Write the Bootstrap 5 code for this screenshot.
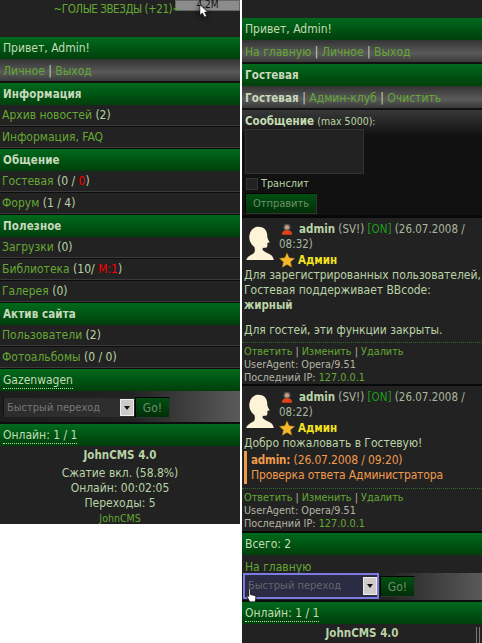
<!DOCTYPE html>
<html lang="ru">
<head>
  <meta charset="UTF-8" />
  <meta name="viewport" content="width=device-width, initial-scale=1" />
  <title>JohnCMS</title>
  <link href="https://cdn.jsdelivr.net/npm/bootstrap@5.3.0/dist/css/bootstrap.min.css" rel="stylesheet" />
  <style>
    body { background: #fff; font-family: "DejaVu Sans Condensed", "DejaVu Sans", sans-serif; font-size: 12px; line-height: 15px; color: #b9d3a6; overflow: hidden; }
    a { color: #64a832; text-decoration: none; }
    b { font-size: 11.5px; }
    .red { color: #f00; }
    .shot { width: 482px; height: 643px; overflow: hidden; }
    .pane { width: 240px; background: #222; position: relative; flex: none; }
    .pane-l { height: 524px; }
    .pane-r { height: 643px; margin-left: 2px; }
    .top-l { height: 37px; text-align: center; color: #64a832; font-size: 11.500px; letter-spacing: -.45px; padding-right: 6px; line-height: 18px; position: relative; z-index: 1; }
    .top-r { height: 18px; }
    .bar { height: 22px; line-height: 23px; padding-left: 3px; color: #c3dcb1; background: linear-gradient(#006a1c, #003f0b); }
    .bar b { color: #c9d9bc; letter-spacing: .1px; }
    .bar span { border-bottom: 1px dotted #c3dcb1; padding-bottom: 1px; }
    .sub { height: 24px; line-height: 24px; padding-left: 3px; background: linear-gradient(#333, #5a5a5a 60%, #3a3a3a); border-bottom: 2px solid #111; color: #c3dcb1; }
    .sub b { color: #c9d9bc; letter-spacing: .1px; }
    .rowline { height: 22px; line-height: 21px; padding-left: 2px; background: #222; border-bottom: 1px solid #0c0c0c; box-shadow: inset 0 -1px 0 #3a3a3a; }
    .jump { height: 33px; gap: 1px; padding: 6px 0 0 3px; background: linear-gradient(90deg, #1d1d1d, #222 55%, #5a5a5a); border-bottom: 2px solid #0d0d0d; }
    .pick { width: 131px; height: 19px; margin-top: 1px; background: #2d2d2d; color: #777; font-size: 11px; line-height: 19px; padding-left: 3px; position: relative; border-left: 1px solid #111; }
    .pick i { position: absolute; right: 0; top: 1px; width: 14px; height: 17px; background: #cfcbc8; border: 1px solid #eee; }
    .pick i::after { content: ""; position: absolute; left: 3px; top: 6px; border: 3px solid transparent; border-top: 4px solid #111; }
    .go { width: 35px; height: 21px; background: linear-gradient(#004f12, #002f08); color: #6f8d68; text-align: center; line-height: 20px; border-top: 1px solid #000; border-left: 1px solid #000; border-right: 1px solid #333; border-bottom: 1px solid #333; }
    .end { text-align: center; line-height: 15px; padding-top: 2px; }
    .end div { height: 15px; }
    .end .ttl { font-weight: 700; font-size: 11.5px; height: 18px; }
    .end a { font-size: 10.5px; }
    .form-box { height: 108px; padding: 0 3px; background: linear-gradient(#383838, #111 26px); border-bottom: 3px solid #080808; line-height: 22px; }
    .form-box b { color: #c3dcb1; }
    .ta { width: 119px; height: 45px; margin-top: -3px; background: #222; border: 1px solid #333; }
    .tr-line { height: 18px; line-height: 18px; font-size: 10.800px; margin-top: 1px; }
    .chk { width: 12px; height: 12px; margin-left: 1px; background: #222; border: 1px solid #333; margin-right: 3px; }
    .send { width: 72px; height: 21px; text-align: center; line-height: 20px; font-size: 11px; background: linear-gradient(#004f12, #002f08); color: #6f8d68; border-top: 1px solid #000; border-left: 1px solid #000; border-right: 1px solid #333; border-bottom: 1px solid #333; }
    .post { border-bottom: 2px solid #080808; }
    .post-1 { height: 168px; }
    .post-2 { height: 147px; }
    .head { height: 50px; }
    .ava { width: 37px; height: 50px; flex: none; }
    .who { padding-top: 4px; font-size: 11.500px; line-height: 15px; color: #aab69f; }
    .who b { color: #b9d3a6; }
    .ic-usr { margin: 0 6px 0 2px; vertical-align: -3px; }
    .ic-star { margin-right: 3px; vertical-align: -4px; }
    .on { color: #1e9a1e; }
    .rank { color: #f4e21d; font-weight: 700; }
    .txt { line-height: 15px; color: #b9d3a6; padding-left: 2px; white-space: nowrap; letter-spacing: -.03px; }
    .txt p { margin: 0; }
    .txt p + p { margin-top: 10px; }
    .quote { border-left: 3px solid #f09a4c; color: #f09a4c; padding: 2px 0 1px 4px; margin: 0 0 1px; letter-spacing: -.15px; }
    .foot { border-top: 1px dotted #2f6a2a; margin-top: 4px; padding: 2px 0 0 2px; font-size: 10.800px; line-height: 13px; color: #b4b4a4; }
    .home { height: 18px; line-height: 24px; padding-left: 3px; }
    .jump-r { height: 29px; padding: 0 0 0 1px; gap: 1px; background: linear-gradient(90deg, #1d1d1d, #222 60%, #5a5a5a); border-bottom: 2px solid #0d0d0d; }
    .jump-r .pick { width: 136px; height: 26px; margin-top: 0; background: #2b2b44; border: 2px solid #7a7ae0; color: #666; line-height: 22px; }
    .jump-r .pick i { top: 2px; height: 18px; }
    .jump-r .go { margin-top: 3px; }
    .load { position: absolute; left: 175px; top: 0; width: 65px; height: 11px; background: #8c8c8c; border: 1px solid #666; color: #111; font-size: 10px; line-height: 8px; text-align: center; }
    .arrow { position: absolute; left: 199px; top: 5px; filter: drop-shadow(0 1px 3px #000); z-index: 2; }
    .hand { position: absolute; left: 4px; top: 588px; }
    .track { position: absolute; right: 2px; top: 627px; width: 4px; height: 16px; border-left: 1px solid #777; border-right: 1px solid #777; }
  </style>
</head>
<body>
  <svg width="0" height="0" class="position-absolute">
    <symbol id="head" viewBox="0 0 36 42"><path d="M14 1c7-1 13 3 13 11 0 3 1 5 3 8l-3 1c0 2 1 5-2 6-2 0-3 0-4 1 0 3 6 5 11 8 2 2 3 4 3 6H1c1-4 5-6 9-8 2-2 2-5 1-8-5-4-7-9-6-15C6 6 9 2 14 1z" fill="#fdf3d6"/></symbol>
    <symbol id="usr" viewBox="0 0 14 14"><circle cx="7" cy="4.500" r="4.200" fill="#555"/><circle cx="7" cy="4.500" r="2.600" fill="#c9a080"/><path d="M1 13c0-4 3-5 6-5s6 1 6 5z" fill="#e0401a"/></symbol>
    <symbol id="star" viewBox="0 0 18 18"><path d="M9 1l2.400 5.600 6.100.6-4.600 4 1.400 6L9 14l-5.300 3.200 1.400-6-4.600-4 6.100-.6z" fill="#f4b92a" stroke="#c9821a" stroke-width=".5"/></symbol>
  </svg>
  <div class="shot d-flex">
    <div class="pane pane-l">
      <div class="top-l">~ГОЛЫЕ ЗВЕЗДЫ (+21)~</div>
      <div class="bar">Привет, Admin!</div>
      <div class="sub"><a href="#">Личное</a> | <a href="#">Выход</a></div>
      <div class="bar"><b>Информация</b></div>
      <div class="rowline"><a href="#">Архив новостей</a> (2)</div>
      <div class="rowline"><a href="#">Информация, FAQ</a></div>
      <div class="bar"><b>Общение</b></div>
      <div class="rowline"><a href="#">Гостевая</a> (0 / <span class="red">0</span>)</div>
      <div class="rowline"><a href="#">Форум</a> (1 / 4)</div>
      <div class="bar"><b>Полезное</b></div>
      <div class="rowline"><a href="#">Загрузки</a> (0)</div>
      <div class="rowline"><a href="#">Библиотека</a> (10/ <span class="red">М:1</span>)</div>
      <div class="rowline"><a href="#">Галерея</a> (0)</div>
      <div class="bar"><b>Актив сайта</b></div>
      <div class="rowline"><a href="#">Пользователи</a> (2)</div>
      <div class="rowline"><a href="#">Фотоальбомы</a> (0 / 0)</div>
      <div class="bar"><span>Gazenwagen</span></div>
      <div class="jump d-flex">
        <div class="pick">Быстрый переход<i></i></div>
        <div class="go">Go!</div>
      </div>
      <div class="bar"><span>Онлайн: 1 / 1</span></div>
      <div class="end">
        <div class="ttl">JohnCMS 4.0</div>
        <div>Сжатие вкл. (58.8%)</div>
        <div>Онлайн: 00:02:05</div>
        <div>Переходы: 5</div>
        <div><a href="#">JohnCMS</a></div>
      </div>
      <div class="load">4.2M</div>
      <svg class="arrow" width="10" height="13" viewBox="0 0 10 13"><path d="M1 0v10l2.500-2 2 4 2-1-2-4h3z" fill="#fff" stroke="#111" stroke-width=".5"/></svg>
    </div>
    <div class="pane pane-r">
      <div class="top-r"></div>
      <div class="bar">Привет, Admin!</div>
      <div class="sub"><a href="#">На главную</a> | <a href="#">Личное</a> | <a href="#">Выход</a></div>
      <div class="bar"><b>Гостевая</b></div>
      <div class="sub"><b>Гостевая</b> | <a href="#">Админ-клуб</a> | <a href="#">Очистить</a></div>
      <div class="form-box">
        <div><b>Сообщение</b> <span class="small">(max 5000):</span></div>
        <div class="ta"></div>
        <div class="tr-line d-flex align-items-center"><span class="chk"></span>Транслит</div>
        <div class="send">Отправить</div>
      </div>
      <div class="post post-1">
        <div class="head d-flex">
          <svg class="ava"><use href="#head" width="30" height="34" x="3" y="8"/></svg>
          <div class="who">
            <svg width="12" height="13" class="ic-usr"><use href="#usr"/></svg><b>admin</b> (SV!) <span class="on">[ON]</span> (26.07.2008 / 08:32)<br>
            <svg width="16" height="16" class="ic-star"><use href="#star"/></svg><span class="rank">Админ</span>
          </div>
        </div>
        <div class="txt">
          <p>Для зарегистрированных пользователей,<br>Гостевая поддерживает BBcode:<br><b>жирный</b></p>
          <p>Для гостей, эти функции закрыты.</p>
        </div>
        <div class="foot">
          <a href="#">Ответить</a> | <a href="#">Изменить</a> | <a href="#">Удалить</a><br>
          UserAgent: Opera/9.51<br>
          Последний IP: <a href="#">127.0.0.1</a>
        </div>
      </div>
      <div class="post post-2">
        <div class="head d-flex">
          <svg class="ava"><use href="#head" width="30" height="34" x="3" y="8"/></svg>
          <div class="who">
            <svg width="12" height="13" class="ic-usr"><use href="#usr"/></svg><b>admin</b> (SV!) <span class="on">[ON]</span> (26.07.2008 / 08:22)<br>
            <svg width="16" height="16" class="ic-star"><use href="#star"/></svg><span class="rank">Админ</span>
          </div>
        </div>
        <div class="txt">
          <p>Добро пожаловать в Гостевую!</p>
          <div class="quote"><b>admin:</b> (26.07.2008 / 09:20)<br>Проверка ответа Администратора</div>
        </div>
        <div class="foot">
          <a href="#">Ответить</a> | <a href="#">Изменить</a> | <a href="#">Удалить</a><br>
          UserAgent: Opera/9.51<br>
          Последний IP: <a href="#">127.0.0.1</a>
        </div>
      </div>
      <div class="bar">Всего: 2</div>
      <div class="home"><a href="#">На главную</a></div>
      <div class="jump-r d-flex">
        <div class="pick">Быстрый переход<i></i></div>
        <div class="go">Go!</div>
      </div>
      <div class="bar"><span>Онлайн: 1 / 1</span></div>
      <div class="end"><div class="ttl">JohnCMS 4.0</div></div>
      <div class="track"></div>
      <svg class="hand" width="11" height="15" viewBox="0 0 12 16"><path d="M3 1c1-1 2 0 2 1v5l5 1c1 1 1 3 0 7H4L1 9c0-1 1-1 2 0z" fill="#fff" stroke="#111"/></svg>
    </div>
  </div>
  <script src="https://cdn.jsdelivr.net/npm/bootstrap@5.3.0/dist/js/bootstrap.bundle.min.js"></script>
</body>
</html>
